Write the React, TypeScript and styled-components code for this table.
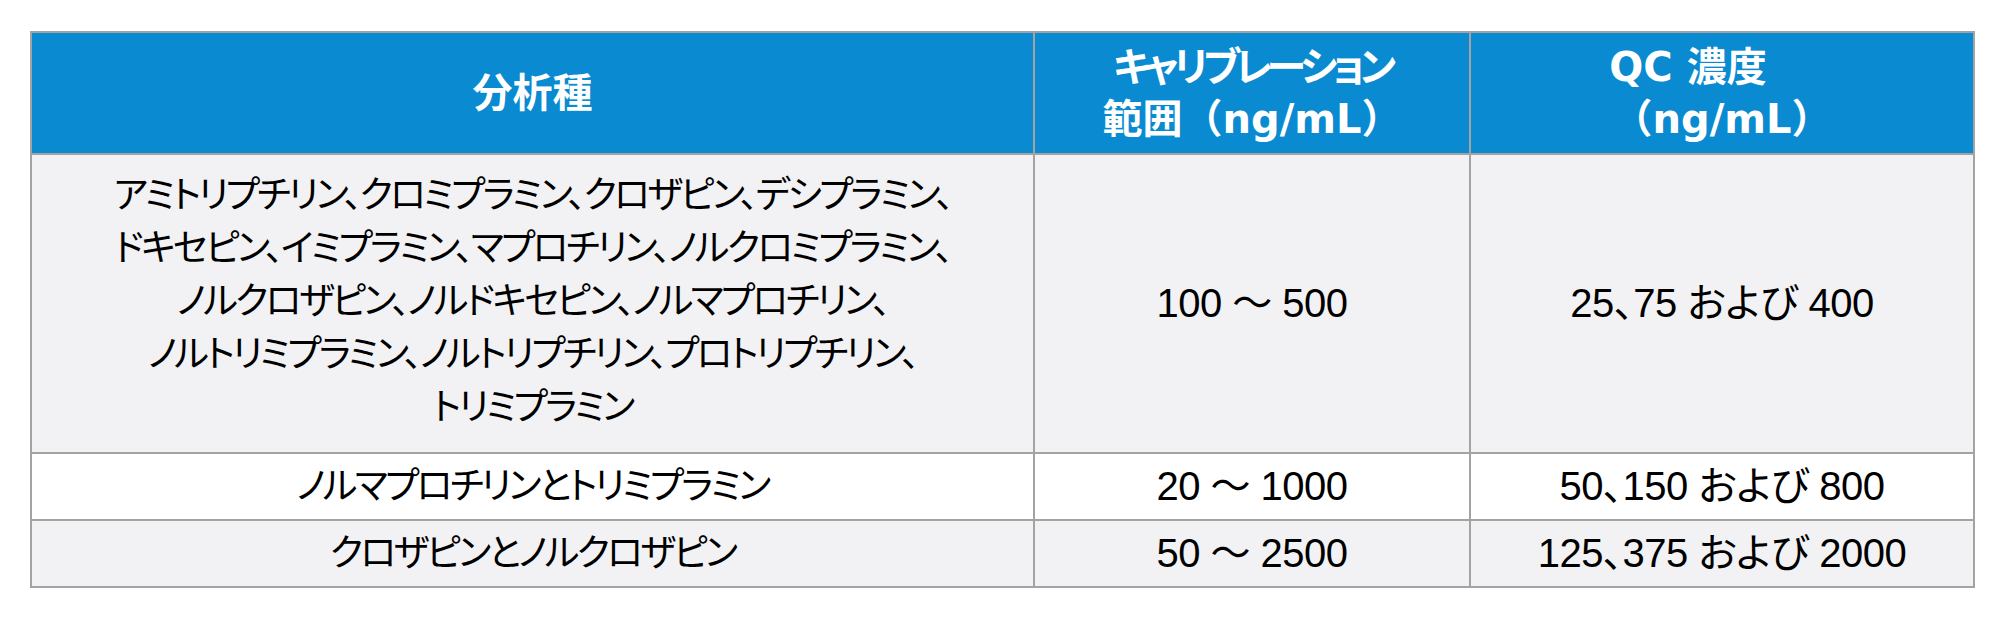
import styled, { createGlobalStyle } from "styled-components";

const GlobalStyle = createGlobalStyle`
  html, body {
    margin: 0;
    padding: 0;
    background: #ffffff;
  }
  body {
    font-family: "Liberation Sans", "Noto Sans CJK JP", sans-serif;
  }
`;

const Page = styled.div`
  width: 2000px;
  height: 626px;
  padding: 31px 0 0 30px;
  box-sizing: border-box;
`;

const Table = styled.table`
  width: 1943px;
  border-collapse: collapse;
  table-layout: fixed;
  border: 2px solid #a3a3a3;
`;

const HeadCell = styled.th`
  height: 120px;
  padding: 0 10px;
  background: #0a8ad0;
  color: #ffffff;
  border: 2px solid #a3a3a3;
  font-family: "DejaVu Sans", "Noto Sans CJK JP", sans-serif;
  font-weight: 700;
  font-size: 40px;
  line-height: 52px;
  text-align: center;
  vertical-align: middle;
`;

const HeadLine = styled.span<{ $shift?: number; $tight?: boolean }>`
  display: block;
  white-space: nowrap;
  margin-right: ${(p) => p.$shift ?? 0}px;
  font-feature-settings: ${(p) => (p.$tight ? '"palt"' : "normal")};
  letter-spacing: ${(p) => (p.$tight ? "-5px" : "0")};
`;

const Row = styled.tr<{ $shade?: boolean }>`
  background: ${(p) => (p.$shade ? "#f2f2f4" : "#ffffff")};
`;

const Cell = styled.td<{ $top?: number; $bottom?: number; $names?: boolean }>`
  padding: ${(p) => p.$top ?? 6}px 10px ${(p) => p.$bottom ?? 6}px;
  border: 2px solid #a3a3a3;
  color: #000000;
  font-size: ${(p) => (p.$names ? 37 : 40)}px;
  line-height: 53px;
  text-align: center;
  vertical-align: middle;
  font-feature-settings: "palt";
  letter-spacing: ${(p) => (p.$names ? "-2.7px" : "-0.5px")};
`;

const Line = styled.span`
  display: block;
  white-space: nowrap;
`;

const analytes = [
  "アミトリプチリン、クロミプラミン、クロザピン、デシプラミン、",
  "ドキセピン、イミプラミン、マプロチリン、ノルクロミプラミン、",
  "ノルクロザピン、ノルドキセピン、ノルマプロチリン、",
  "ノルトリミプラミン、ノルトリプチリン、プロトリプチリン、",
  "トリミプラミン",
];

export default function App() {
  return (
    <>
      <GlobalStyle />
      <Page>
        <Table>
          <colgroup>
            <col style={{ width: 1003 }} />
            <col style={{ width: 436 }} />
            <col style={{ width: 504 }} />
          </colgroup>
          <thead>
            <tr>
              <HeadCell>分析種</HeadCell>
              <HeadCell>
                <HeadLine $tight>キャリブレーション</HeadLine>
                <HeadLine>範囲（ng/mL）</HeadLine>
              </HeadCell>
              <HeadCell>
                <HeadLine $shift={68}>QC 濃度</HeadLine>
                <HeadLine>（ng/mL）</HeadLine>
              </HeadCell>
            </tr>
          </thead>
          <tbody>
            <Row $shade>
              <Cell $names $top={14} $bottom={18}>
                {analytes.map((t) => (
                  <Line key={t}>{t}</Line>
                ))}
              </Cell>
              <Cell>100 ～ 500</Cell>
              <Cell>25、75 および 400</Cell>
            </Row>
            <Row>
              <Cell $names>ノルマプロチリンとトリミプラミン</Cell>
              <Cell>20 ～ 1000</Cell>
              <Cell>50、150 および 800</Cell>
            </Row>
            <Row $shade>
              <Cell $names>クロザピンとノルクロザピン</Cell>
              <Cell>50 ～ 2500</Cell>
              <Cell>125、375 および 2000</Cell>
            </Row>
          </tbody>
        </Table>
      </Page>
    </>
  );
}
